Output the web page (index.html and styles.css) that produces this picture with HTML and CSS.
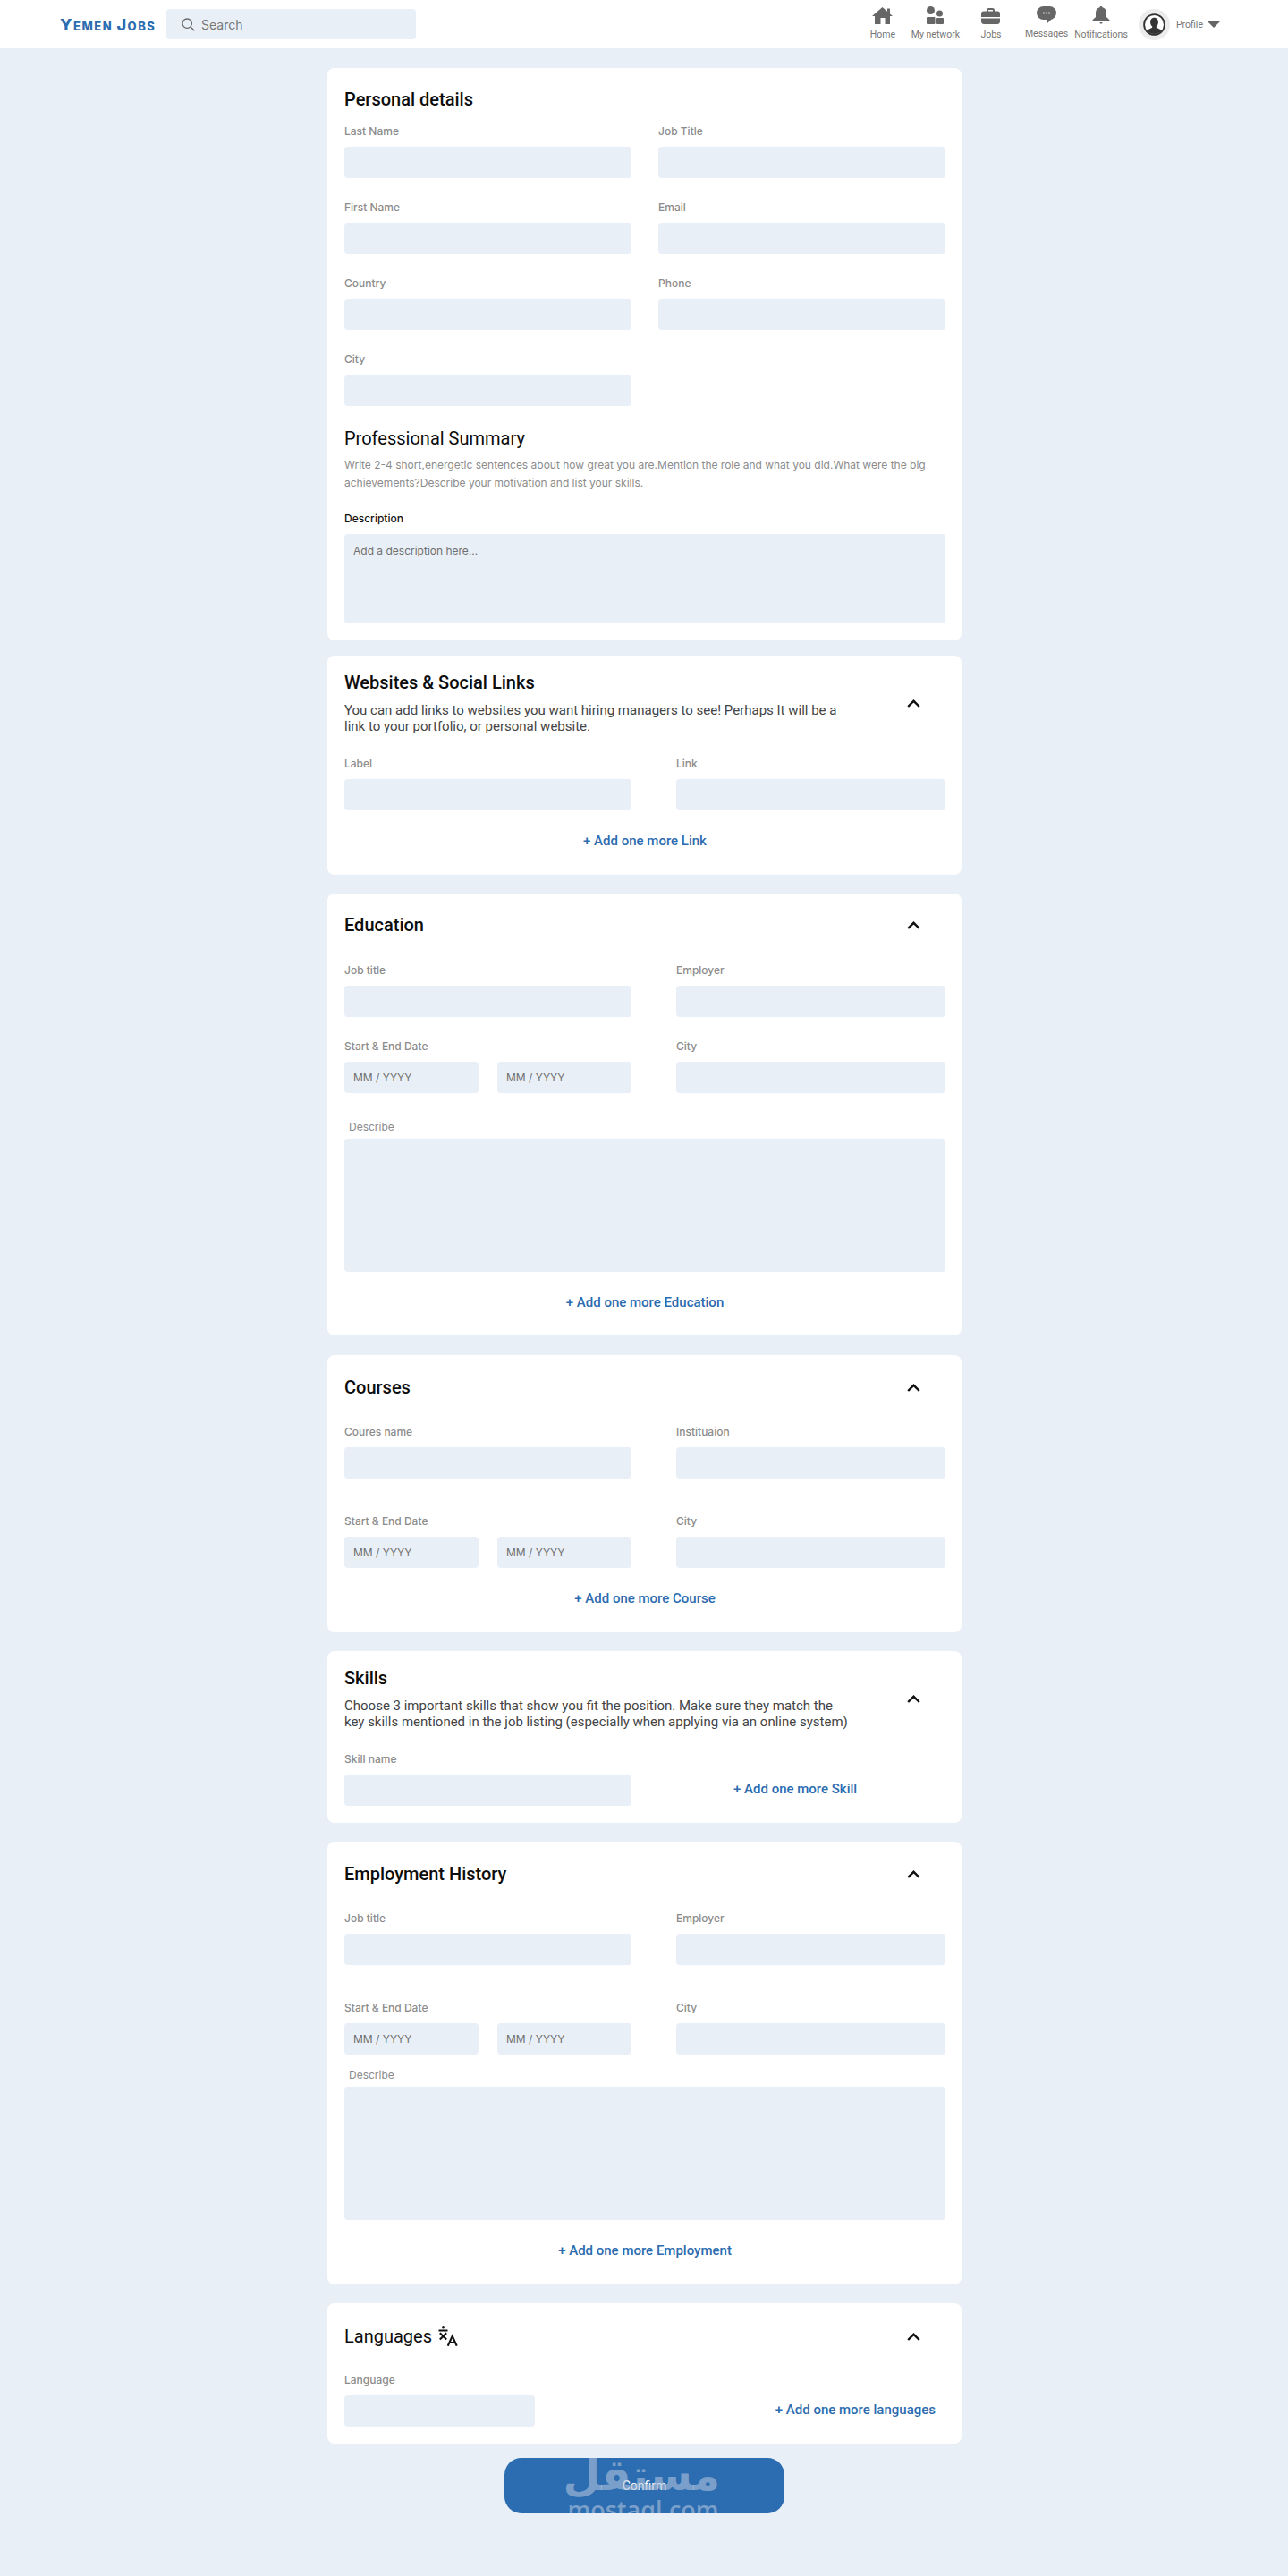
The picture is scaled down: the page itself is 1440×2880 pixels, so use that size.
FILE: index.html
```html
<!DOCTYPE html>
<html lang="en">
<head>
    <meta charset="UTF-8">
    <meta name="viewport" content="width=device-width, initial-scale=1.0">
    <title>Yemen Jobs - Resume</title>
    <link rel="stylesheet" href="styles.css">
</head>
<body>
    <!-- Top bar -->
    <header class="topbar">
        <div class="logo"><span class="logo-cap">Y</span>EMEN <span class="logo-cap">J</span>OBS</div>
        <div class="search">
            <svg class="search-icon" width="15" height="15" viewBox="0 0 15 15"><circle cx="6.2" cy="6.2" r="5.2"/><path d="M10 10l4.3 4.3"/></svg>
            <span>Search</span>
        </div>
        <nav class="nav">
            <a class="nav-item nav-home">
                <svg width="23" height="19" viewBox="0 0 23 19"><path d="M11.5 0L17 4.8V1.5h3v5.9l3 2.6h-3v9h-5.5v-7h-5v7H3v-9H0z"/></svg>
                <span>Home</span>
            </a>
            <a class="nav-item">
                <svg width="19" height="20" viewBox="0 0 19 20"><circle cx="4.5" cy="4.5" r="4.5"/><circle cx="14.5" cy="8" r="3.5"/><rect x="0" y="12" width="9.5" height="8" rx="1"/><rect x="11" y="13" width="8" height="7" rx="1"/></svg>
                <span>My network</span>
            </a>
            <a class="nav-item">
                <svg width="21" height="18" viewBox="0 0 21 18"><path class="handle" d="M7 4V2.5C7 1.5 7.7 1 8.500 1h4c.8 0 1.500.5 1.500 1.500V4"/><path d="M2.500 3.500h16c1.400 0 2.500 1.100 2.500 2.500v4H0V6c0-1.400 1.100-2.500 2.500-2.500z"/><path d="M0 11.500h21V15c0 1.700-1.300 3-3 3H3c-1.700 0-3-1.300-3-3z"/></svg>
                <span>Jobs</span>
            </a>
            <a class="nav-item nav-messages">
                <svg width="22" height="19" viewBox="0 0 22 19"><rect width="22" height="15" rx="7.500"/><path d="M11 14h6l-5 5z"/><circle class="dot" cx="8" cy="7.500" r="1.100"/><circle class="dot" cx="11" cy="7.500" r="1.100"/><circle class="dot" cx="14" cy="7.500" r="1.100"/></svg>
                <span>Messages</span>
            </a>
            <a class="nav-item nav-bell">
                <svg width="20" height="20" viewBox="0 0 20 20"><path d="M10 0c.8 0 1.400.5 1.500 1.200C14.200 1.800 16 4 16 7v5l3.500 3.200V17H.5v-1.800L4 12V7c0-3 1.800-5.200 4.500-5.800C8.600.5 9.200 0 10 0z"/><path d="M8 18h4l-2 2z"/></svg>
                <span>Notifications</span>
            </a>
        </nav>
        <div class="profile">
            <div class="avatar">
                <svg width="25" height="25" viewBox="0 0 27 27">
                    <circle class="ring" cx="13.500" cy="13.500" r="12.300"/>
                    <path class="person" d="M13.500 5c3 0 4.800 2.400 4.800 5.400 0 2.300-.9 4.200-2.300 5.300v1.400l4.900 2.300c.8.400 1.300.8 1.700 1.300a12 12 0 0 1-18.200 0c.4-.5.900-.9 1.700-1.300l4.900-2.300v-1.400c-1.400-1.100-2.300-3-2.300-5.300C8.700 7.400 10.500 5 13.500 5z"/>
                </svg>
            </div>
            <span class="profile-name">Profile</span>
            <span class="profile-caret"></span>
        </div>
    </header>

    <main class="page">
        <!-- Personal details -->
        <section class="card card-personal">
            <h2 class="card-title">Personal details</h2>
            <div class="grid grid-even fields-personal">
                <div class="field"><label>Last Name</label><input type="text"></div>
                <div class="field"><label>Job Title</label><input type="text"></div>
                <div class="field"><label>First Name</label><input type="text"></div>
                <div class="field"><label>Email</label><input type="email"></div>
                <div class="field"><label>Country</label><input type="text"></div>
                <div class="field"><label>Phone</label><input type="text"></div>
                <div class="field"><label>City</label><input type="text"></div>
            </div>
            <h2 class="summary-title">Professional Summary</h2>
            <p class="summary-text">Write 2-4 short,energetic sentences about how great you are.Mention the role and what you did.What were the big<br>achievements?Describe your motivation and list your skills.</p>
            <label class="description-label">Description</label>
            <textarea class="description" placeholder="Add a description here..."></textarea>
        </section>

        <!-- Websites -->
        <section class="card card-websites">
            <div class="card-head">
                <div>
                    <h2 class="card-title">Websites &amp; Social Links</h2>
                    <p class="card-text">You can add links to websites you want hiring managers to see! Perhaps It will be a<br>link to your portfolio, or personal website.</p>
                </div>
                <svg class="chevron" width="15" height="9" viewBox="0 0 15 9"><path d="M1.200 8L7.500 1.800 13.800 8"/></svg>
            </div>
            <div class="grid fields-websites">
                <div class="field"><label>Label</label><input type="text"></div>
                <div class="field"><label>Link</label><input type="text"></div>
            </div>
            <a class="add-link">+ Add one more Link</a>
        </section>

        <!-- Education -->
        <section class="card card-education">
            <div class="card-head">
                <h2 class="card-title">Education</h2>
                <svg class="chevron" width="15" height="9" viewBox="0 0 15 9"><path d="M1.200 8L7.500 1.800 13.800 8"/></svg>
            </div>
            <div class="grid fields-education">
                <div class="field"><label>Job title</label><input type="text"></div>
                <div class="field"><label>Employer</label><input type="text"></div>
                <div class="field">
                    <label>Start &amp; End Date</label>
                    <div class="dates"><input type="text" placeholder="MM / YYYY"><input type="text" placeholder="MM / YYYY"></div>
                </div>
                <div class="field"><label>City</label><input type="text"></div>
            </div>
            <label class="describe-label describe-education">Describe</label>
            <textarea class="describe"></textarea>
            <a class="add-link">+ Add one more Education</a>
        </section>

        <!-- Courses -->
        <section class="card card-courses">
            <div class="card-head">
                <h2 class="card-title">Courses</h2>
                <svg class="chevron" width="15" height="9" viewBox="0 0 15 9"><path d="M1.200 8L7.500 1.800 13.800 8"/></svg>
            </div>
            <div class="grid grid-wide-gap fields-courses">
                <div class="field"><label>Coures name</label><input type="text"></div>
                <div class="field"><label>Instituaion</label><input type="text"></div>
                <div class="field">
                    <label>Start &amp; End Date</label>
                    <div class="dates"><input type="text" placeholder="MM / YYYY"><input type="text" placeholder="MM / YYYY"></div>
                </div>
                <div class="field"><label>City</label><input type="text"></div>
            </div>
            <a class="add-link">+ Add one more Course</a>
        </section>

        <!-- Skills -->
        <section class="card card-skills">
            <div class="card-head">
                <div>
                    <h2 class="card-title">Skills</h2>
                    <p class="card-text">Choose 3 important skills that show you fit the position. Make sure they match the<br>key skills mentioned in the job listing (especially when applying via an online system)</p>
                </div>
                <svg class="chevron" width="15" height="9" viewBox="0 0 15 9"><path d="M1.200 8L7.500 1.800 13.800 8"/></svg>
            </div>
            <div class="grid fields-skills">
                <div class="field"><label>Skill name</label><input type="text"></div>
                <a class="add-inline add-skill">+ Add one more Skill</a>
            </div>
        </section>

        <!-- Employment -->
        <section class="card card-employment">
            <div class="card-head">
                <h2 class="card-title">Employment History</h2>
                <svg class="chevron" width="15" height="9" viewBox="0 0 15 9"><path d="M1.200 8L7.500 1.800 13.800 8"/></svg>
            </div>
            <div class="grid grid-wide-gap fields-employment">
                <div class="field"><label>Job title</label><input type="text"></div>
                <div class="field"><label>Employer</label><input type="text"></div>
                <div class="field">
                    <label>Start &amp; End Date</label>
                    <div class="dates"><input type="text" placeholder="MM / YYYY"><input type="text" placeholder="MM / YYYY"></div>
                </div>
                <div class="field"><label>City</label><input type="text"></div>
            </div>
            <label class="describe-label describe-employment">Describe</label>
            <textarea class="describe"></textarea>
            <a class="add-link">+ Add one more Employment</a>
        </section>

        <!-- Languages -->
        <section class="card card-languages">
            <div class="card-head">
                <h2 class="languages-title">Languages
                    <svg class="translate-icon" width="22" height="22" viewBox="0 0 22 22"><circle class="fill" cx="5.500" cy="1.300" r="1.200"/><path d="M.5 4.500h10M1.800 7.200l7.400 7.300M9.200 7.200l-7.400 7.300M10.700 21.700l5-11 5 11M12.600 18h6.200"/></svg>
                </h2>
                <svg class="chevron" width="15" height="9" viewBox="0 0 15 9"><path d="M1.200 8L7.500 1.800 13.800 8"/></svg>
            </div>
            <div class="fields-languages">
                <div class="field field-language"><label>Language</label><input type="text"></div>
                <a class="add-inline">+ Add one more languages</a>
            </div>
        </section>

        <div class="confirm-row">
            <button class="confirm" type="button">Confirm</button>
            <div class="watermark">
                <div class="watermark-ar" lang="ar" dir="rtl">مستقل</div>
                <div class="watermark-en">mostaql.com</div>
            </div>
        </div>
    </main>
</body>
</html>
```

FILE: styles.css
```css
* {
    box-sizing: border-box;
}

body {
    margin: 0;
    padding: 0;
    background-color: #e9eff7;
    font-family: Inter, "Liberation Sans", sans-serif;
}

/* Top bar */
.topbar {
    display: flex;
    align-items: center;
    height: 54px;
    padding: 0 76px 0 67px;
    background-color: #fff;
}

.logo {
    width: 109px;
    color: #2c6cb0;
    font-family: Inter, sans-serif;
    font-size: 13px;
    font-weight: 800;
    letter-spacing: 1.5px;
    white-space: nowrap;
}

.logo-cap {
    font-size: 18px;
}

.search {
    display: flex;
    align-items: center;
    gap: 7px;
    width: 279px;
    height: 34px;
    margin-left: 10px;
    padding-left: 17px;
    background-color: #e9eff7;
    border-radius: 4px;
    color: #777;
    font-size: 14px;
}

.search-icon {
    fill: none;
    stroke: #666;
    stroke-width: 1.3;
}

.nav {
    display: flex;
    align-self: flex-start;
    margin-left: auto;
}

.nav-item {
    display: flex;
    flex-direction: column;
    align-items: center;
    justify-content: flex-end;
    width: 62px;
    height: 45px;
    color: #777;
    font-family: Roboto, sans-serif;
    font-size: 10.5px;
    line-height: 12px;
}

.nav-item svg {
    margin-bottom: 6px;
    fill: #666;
}

.nav-item .handle {
    fill: none;
    stroke: #666;
    stroke-width: 2;
}

.nav-item .dot {
    fill: #fff;
}

.nav-home {
    width: 56px;
}

.nav-bell {
    width: 60px;
}

.nav-messages span {
    margin-bottom: 1px;
}

.profile {
    display: flex;
    align-items: center;
    margin-left: 12px;
}

.avatar {
    display: flex;
    align-items: center;
    justify-content: center;
    width: 35px;
    height: 35px;
    background-color: #ececec;
    border-radius: 50%;
}

.avatar .ring {
    fill: #fff;
    stroke: #333;
    stroke-width: 2;
}

.avatar .person {
    fill: #333;
}

.profile-name {
    margin-left: 7px;
    color: #777;
    font-family: Roboto, sans-serif;
    font-size: 10.5px;
}

.profile-caret {
    width: 0;
    height: 0;
    margin-left: 5px;
    border-top: 7px solid #666;
    border-left: 7px solid transparent;
    border-right: 7px solid transparent;
}

/* Cards */
.page {
    width: 709px;
    margin-left: 366px;
}

.card {
    padding: 0 18px 0 19px;
    background-color: #fff;
    border-radius: 8px;
}

.card-personal {
    margin-top: 22px;
    margin-bottom: 17px;
    padding-top: 23px;
    padding-bottom: 19px;
}

.card-websites {
    margin-bottom: 21px;
    padding-top: 18px;
    padding-bottom: 28px;
}

.card-education {
    margin-bottom: 22px;
    padding-top: 23px;
    padding-bottom: 27px;
}

.card-courses {
    margin-bottom: 21px;
    padding-top: 24px;
    padding-bottom: 28px;
}

.card-skills {
    margin-bottom: 21px;
    padding-top: 18px;
    padding-bottom: 19px;
}

.card-employment {
    margin-bottom: 21px;
    padding-top: 24px;
    padding-bottom: 28px;
}

.card-languages {
    padding-top: 25px;
    padding-bottom: 19px;
}

.card-head {
    display: flex;
    align-items: center;
    justify-content: space-between;
}

.card-title {
    margin: 0;
    color: #0d0d0d;
    font-family: Roboto, sans-serif;
    font-size: 20px;
    font-weight: 500;
    line-height: 24px;
}

.card-text {
    margin: 10px 0 0;
    color: #444;
    font-family: Roboto, sans-serif;
    font-size: 15px;
    line-height: 18px;
    white-space: nowrap;
}

.chevron {
    flex-shrink: 0;
    margin-right: 28px;
    fill: none;
    stroke: #111;
    stroke-width: 2.4;
}

/* Form fields */
.grid {
    display: grid;
    grid-template-columns: 321px 301px;
    column-gap: 50px;
    row-gap: 25px;
}

.grid-even {
    grid-template-columns: 321px 321px;
    column-gap: 30px;
}

.grid-wide-gap {
    row-gap: 40px;
}

.fields-personal {
    margin-top: 16px;
}

.fields-websites {
    margin-top: 25px;
}

.fields-education {
    margin-top: 31px;
}

.fields-courses,
.fields-employment {
    margin-top: 30px;
}

.fields-skills {
    margin-top: 25px;
}

.field label,
.description-label {
    display: block;
    height: 16px;
    margin-bottom: 9px;
    color: #8c8c8c;
    font-size: 12px;
    font-weight: 500;
    line-height: 16px;
}

input,
textarea {
    display: block;
    width: 100%;
    padding: 0 10px;
    background-color: #e9eff7;
    border: none;
    border-radius: 4px;
    font-family: Inter, sans-serif;
    font-size: 12px;
    resize: none;
}

input {
    height: 35px;
}

input::placeholder,
textarea::placeholder {
    color: #6f6f6f;
    opacity: 1;
}

.dates {
    display: flex;
    gap: 21px;
}

.summary-title {
    margin: 24px 0 0;
    color: #0d0d0d;
    font-family: Roboto, sans-serif;
    font-size: 20px;
    font-weight: 400;
    line-height: 24px;
}

.summary-text {
    margin: 8px 0 0;
    color: #8c8c8c;
    font-size: 12px;
    line-height: 20px;
    white-space: nowrap;
}

.description-label {
    margin-top: 22px;
    color: #111;
}

.description {
    height: 100px;
    padding-top: 11px;
}

.describe-label {
    display: block;
    height: 16px;
    margin-bottom: 5px;
    padding-left: 5px;
    color: #8c8c8c;
    font-size: 12px;
    line-height: 16px;
}

.describe-education {
    margin-top: 30px;
}

.describe-employment {
    margin-top: 15px;
}

.describe {
    height: 149px;
}

.add-link,
.add-inline {
    color: #2c6cb0;
    font-family: Roboto, sans-serif;
    font-size: 15px;
    font-weight: 500;
    line-height: 20px;
}

.add-link {
    display: block;
    margin-top: 24px;
    text-align: center;
}

.add-inline {
    align-self: end;
    margin-bottom: 9px;
}

.add-skill {
    padding-left: 64px;
}

/* Languages */
.languages-title {
    display: flex;
    align-items: center;
    gap: 7px;
    margin: 0;
    color: #0d0d0d;
    font-family: Roboto, sans-serif;
    font-size: 20px;
    font-weight: 400;
    line-height: 24px;
}

.translate-icon {
    fill: none;
    stroke: #111;
    stroke-width: 2.1;
}

.translate-icon .fill {
    fill: #111;
    stroke: none;
}

.fields-languages {
    display: flex;
    justify-content: space-between;
    margin-top: 29px;
    padding-right: 11px;
}

.field-language {
    width: 213px;
}

/* Confirm button */
.confirm-row {
    position: relative;
    display: flex;
    justify-content: center;
    margin-top: 16px;
}

.confirm {
    width: 313px;
    height: 62px;
    background-color: #2c6cb0;
    border: none;
    border-radius: 19px;
    color: #fff;
    cursor: pointer;
    font-family: Roboto, sans-serif;
    font-size: 14px;
}

.watermark {
    position: absolute;
    top: -8px;
    left: 267px;
    width: 172px;
    color: rgba(175, 195, 220, 0.6);
    font-family: "DejaVu Sans", sans-serif;
    font-weight: 700;
    text-align: center;
    pointer-events: none;
}

.watermark-ar {
    font-size: 48px;
    line-height: 54px;
}

.watermark-en {
    font-family: "Open Sans", sans-serif;
    font-size: 27px;
    font-weight: 600;
    line-height: 24px;
}
```
